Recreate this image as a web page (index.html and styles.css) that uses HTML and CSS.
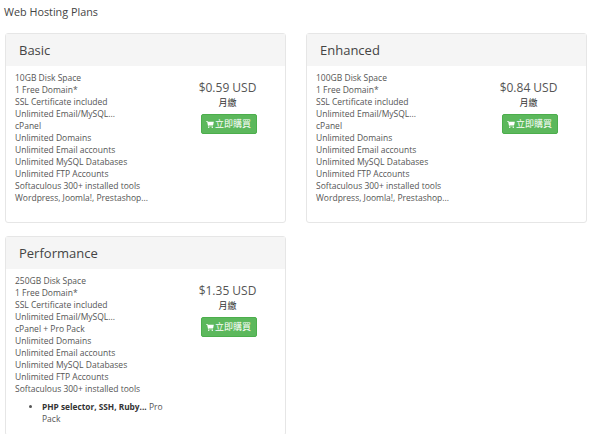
FILE: index.html
```html
<!DOCTYPE html>
<html lang="zh-Hant">
<head>
<meta charset="utf-8">
<title>Web Hosting Plans</title>
<link rel="stylesheet" href="styles.css">
</head>
<body>
<h1 class="page-title">Web Hosting Plans</h1>
<div class="plans">
  <section class="plan">
    <h3 class="plan-head">Basic</h3>
    <div class="plan-body">
      <div class="features">10GB Disk Space<br>1 Free Domain*<br>SSL Certificate included<br>Unlimited Email/MySQL...<br>cPanel<br>Unlimited Domains<br>Unlimited Email accounts<br>Unlimited MySQL Databases<br>Unlimited FTP Accounts<br>Softaculous 300+ installed tools<br>Wordpress, Joomla!, Prestashop...</div>
      <div class="pricing">
        <div class="price">$0.59 USD</div>
        <div class="cycle">月繳</div>
        <a class="buy"><svg class="cart" viewBox="0 0 12 11"><path d="M0 0h2.2l.4 1.2H12l-1 5H3.6l.2 1h7v1H3L1.5 1H0z"/><circle cx="4" cy="9.8" r="1.1"/><circle cx="9.6" cy="9.8" r="1.1"/></svg>立即購買</a>
      </div>
    </div>
  </section>
  <section class="plan">
    <h3 class="plan-head">Enhanced</h3>
    <div class="plan-body">
      <div class="features">100GB Disk Space<br>1 Free Domain*<br>SSL Certificate included<br>Unlimited Email/MySQL...<br>cPanel<br>Unlimited Domains<br>Unlimited Email accounts<br>Unlimited MySQL Databases<br>Unlimited FTP Accounts<br>Softaculous 300+ installed tools<br>Wordpress, Joomla!, Prestashop...</div>
      <div class="pricing">
        <div class="price">$0.84 USD</div>
        <div class="cycle">月繳</div>
        <a class="buy"><svg class="cart" viewBox="0 0 12 11"><path d="M0 0h2.2l.4 1.2H12l-1 5H3.6l.2 1h7v1H3L1.5 1H0z"/><circle cx="4" cy="9.8" r="1.1"/><circle cx="9.6" cy="9.8" r="1.1"/></svg>立即購買</a>
      </div>
    </div>
  </section>
  <section class="plan">
    <h3 class="plan-head">Performance</h3>
    <div class="plan-body">
      <div class="features">250GB Disk Space<br>1 Free Domain*<br>SSL Certificate included<br>Unlimited Email/MySQL...<br>cPanel + Pro Pack<br>Unlimited Domains<br>Unlimited Email accounts<br>Unlimited MySQL Databases<br>Unlimited FTP Accounts<br>Softaculous 300+ installed tools
        <ul class="extras"><li><strong>PHP selector, SSH, Ruby...</strong> Pro Pack</li></ul>
      </div>
      <div class="pricing">
        <div class="price">$1.35 USD</div>
        <div class="cycle">月繳</div>
        <a class="buy"><svg class="cart" viewBox="0 0 12 11"><path d="M0 0h2.2l.4 1.2H12l-1 5H3.6l.2 1h7v1H3L1.5 1H0z"/><circle cx="4" cy="9.8" r="1.1"/><circle cx="9.6" cy="9.8" r="1.1"/></svg>立即購買</a>
      </div>
    </div>
  </section>
</div>
</body>
</html>
```
FILE: styles.css
```css
* { box-sizing: border-box; }
html, body { height: 100%; overflow: hidden; }
body {
  margin: 0;
  padding: 5px 13px 0 5px;
  background: #fff;
  color: #444;
  font-family: "Open Sans", "Noto Sans CJK TC", sans-serif;
  font-size: 8.5px;
  line-height: 12px;
}
.page-title {
  margin: 0 0 14px -1px;
  font-size: 10.8px;
  line-height: 14px;
  font-weight: 400;
  color: #444;
}
.plans {
  display: grid;
  grid-template-columns: 281px 281px;
  column-gap: 20px;
  row-gap: 13px;
  align-items: stretch;
}
.plan {
  border: 1px solid #e6e6e6;
  border-radius: 3px;
  background: #fff;
  min-height: 190px;
}
.plan-head {
  margin: 0;
  height: 32px;
  padding: 0 13px;
  background: #f5f5f5;
  font-size: 13px;
  line-height: 33px;
  font-weight: 400;
  color: #444;
}
.plan-body {
  display: flex;
  padding: 6px 9px 10px;
}
.features { width: 164px; color: #555; }
.pricing {
  width: 100px;
  margin-left: 5px;
  text-align: center;
  padding-top: 7px;
}
.price { font-size: 12px; line-height: 18px; color: #555; }
.cycle { font-size: 9px; line-height: 12px; color: #333; }
.buy {
  display: inline-flex;
  align-items: center;
  justify-content: center;
  width: 56px;
  height: 20px;
  margin: 5px 0 0 2px;
  border: 1px solid #4cae4c;
  border-radius: 2px;
  background: #5cb85c;
  color: #fff;
  font-size: 9px;
}
.cart { width: 8px; height: 7px; margin-right: 1px; fill: #fff; }
.extras { margin: 6px 0 0; padding: 0 0 0 27px; }
.extras strong { font-size: 8.3px; font-weight: 700; color: #333; }
```
